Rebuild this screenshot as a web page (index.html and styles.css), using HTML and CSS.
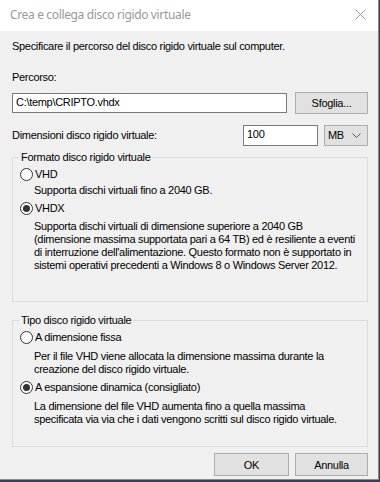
FILE: index.html
```html
<!DOCTYPE html>
<html lang="it">
<head>
  <meta charset="UTF-8">
  <title>Crea e collega disco rigido virtuale</title>
  <link rel="stylesheet" href="styles.css">
</head>
<body>

  <div class="window">
    <div class="titlebar">
      <span class="title">Crea e collega disco rigido virtuale</span>
      <svg class="close" width="11" height="11" viewBox="0 0 11 11">
        <path d="M0.5 0.5 L10.5 10.5 M10.5 0.5 L0.5 10.5" stroke="#9a9a9a" stroke-width="1" fill="none"/>
      </svg>
    </div>

    <div class="content">
      <p class="intro">Specificare il percorso del disco rigido virtuale sul computer.</p>

      <label class="field-label">Percorso:</label>
      <div class="row path-row">
        <div class="textbox path">C:\temp\CRIPTO.vhdx</div>
        <button class="btn browse">Sfoglia...</button>
      </div>

      <div class="row size-row">
        <span class="size-label">Dimensioni disco rigido virtuale:</span>
        <div class="textbox size">100</div>
        <div class="combo">
          <span>MB</span>
          <svg width="9" height="5" viewBox="0 0 9 5">
            <path d="M0.5 0.5 L4.5 4.5 L8.5 0.5" stroke="#555" stroke-width="1" fill="none"/>
          </svg>
        </div>
      </div>

      <fieldset class="group format">
        <legend>Formato disco rigido virtuale</legend>
        <div class="option first">
          <span class="radio"></span>
          <span>VHD</span>
        </div>
        <p class="desc gap-3">Supporta dischi virtuali fino a 2040 GB.</p>
        <div class="option">
          <span class="radio checked"></span>
          <span>VHDX</span>
        </div>
        <p class="desc">Supporta dischi virtuali di dimensione superiore a 2040 GB<br>(dimensione massima supportata pari a 64 TB) ed è resiliente a eventi<br>di interruzione dell'alimentazione. Questo formato non è supportato in<br>sistemi operativi precedenti a Windows 8 o Windows Server 2012.</p>
      </fieldset>

      <fieldset class="group type">
        <legend>Tipo disco rigido virtuale</legend>
        <div class="option first">
          <span class="radio"></span>
          <span>A dimensione fissa</span>
        </div>
        <p class="desc gap-6">Per il file VHD viene allocata la dimensione massima durante la<br>creazione del disco rigido virtuale.</p>
        <div class="option">
          <span class="radio checked"></span>
          <span>A espansione dinamica (consigliato)</span>
        </div>
        <p class="desc gap-6">La dimensione del file VHD aumenta fino a quella massima<br>specificata via via che i dati vengono scritti sul disco rigido virtuale.</p>
      </fieldset>

      <div class="row actions">
        <button class="btn ok">OK</button>
        <button class="btn cancel">Annulla</button>
      </div>
    </div>
  </div>

</body>
</html>
```

FILE: styles.css
```css
body {
  margin: 0;
  background: #3b3f52;
  font-family: 'Liberation Sans', Arial, sans-serif;
  font-size: 11px;
  letter-spacing: -0.3px;
  color: #000;
}

.window {
  width: 378px;
  height: 479px;
  background: #f0f0f0;
  border-right: 1px solid #8a8a8a;
  border-bottom: 1px solid #8a8a8a;
}

.titlebar {
  height: 31px;
  background: #fff;
  display: flex;
  align-items: center;
  justify-content: space-between;
  padding: 0 12px 0 10px;
}

.title {
  font-family: 'Noto Sans', sans-serif;
  font-size: 12px;
  letter-spacing: -0.35px;
  color: #999;
  margin-top: -2px;
}

.close {
  margin-top: -3px;
}

.content {
  padding: 0 10px 0 12px;
  line-height: 13px;
}

.intro {
  margin: 9px 0 0;
}

.field-label {
  display: block;
  margin-top: 18px;
}

.row {
  display: flex;
  align-items: center;
}

.path-row {
  margin-top: 8px;
  height: 22px;
}

.textbox {
  box-sizing: border-box;
  height: 20px;
  background: #fff;
  border: 1px solid #7a7a7a;
  padding: 2px 3px;
}

.path {
  width: 275px;
}

.btn {
  box-sizing: border-box;
  font-family: inherit;
  font-size: 11px;
  letter-spacing: inherit;
  background: #e1e1e1;
  border: 1px solid #adadad;
  padding: 0;
  color: #000;
}

.browse {
  width: 73px;
  height: 22px;
  margin-left: 8px;
}

.size-row {
  margin-top: 11px;
  height: 21px;
}

.size-label {
  flex: 1;
}

.size {
  width: 75px;
  height: 21px;
}

.combo {
  box-sizing: border-box;
  width: 44px;
  height: 21px;
  margin-left: 6px;
  background: #e1e1e1;
  border: 1px solid #adadad;
  display: flex;
  align-items: center;
  justify-content: space-between;
  padding: 0 6px 0 3px;
}

.group {
  margin: 5px 0 0;
  padding: 0 6px 0 7px;
  border: 1px solid #dcdcdc;
}

.group legend {
  padding: 0 2px;
  margin-left: -1px;
}

.format {
  padding-bottom: 29px;
}

.type {
  margin-top: 12px;
  padding-bottom: 20px;
}

.option {
  display: flex;
  align-items: center;
  margin-top: 5px;
}

.option.first {
  margin-top: 4px;
}

.radio {
  box-sizing: border-box;
  width: 13px;
  height: 13px;
  border: 1px solid #333;
  border-radius: 50%;
  background: #fff;
  margin-right: 2px;
  display: flex;
  align-items: center;
  justify-content: center;
}

.radio.checked::after {
  content: "";
  width: 7px;
  height: 7px;
  border-radius: 50%;
  background: #333;
}

.desc {
  margin: 5px 0 0 14px;
}

.desc.gap-3 {
  margin-top: 3px;
}

.desc.gap-6 {
  margin-top: 6px;
}

.actions {
  justify-content: flex-end;
  margin-top: 6px;
}

.ok {
  width: 75px;
  height: 23px;
}

.cancel {
  width: 73px;
  height: 23px;
  margin-left: 6px;
}
```
